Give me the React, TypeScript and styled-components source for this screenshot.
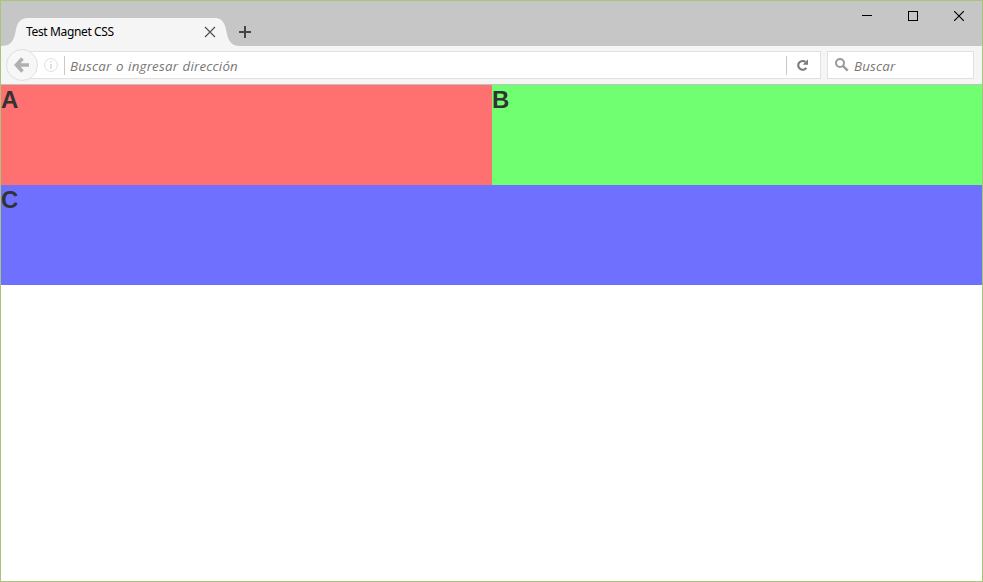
import React from "react";
import styled, { createGlobalStyle } from "styled-components";

const GlobalStyle = createGlobalStyle`
  * { box-sizing: border-box; }
  html, body { margin: 0; padding: 0; overflow: hidden; }
  svg { display: block; flex: none; }
`;

const Window = styled.div`
  width: 983px;
  height: 582px;
  border: 1px solid #a9c47b;
  background: #fff;
  display: flex;
  flex-direction: column;
  overflow: hidden;
  font-family: "Open Sans", "Noto Sans", sans-serif;
`;

const TitleBar = styled.header`
  height: 45px;
  flex: none;
  background: #c6c6c6;
  display: flex;
  align-items: flex-end;
`;

const Tab = styled.div`
  height: 28px;
  display: flex;
`;

const TabBody = styled.div`
  width: 188px;
  height: 28px;
  background: #f5f5f5;
  display: flex;
  align-items: center;
  justify-content: space-between;
`;

const TabTitle = styled.span`
  margin-left: -2px;
  font: 12px/16px "Noto Sans", sans-serif;
  letter-spacing: -0.36px;
  color: #000;
  white-space: nowrap;
`;

const NewTab = styled.button`
  width: 14px;
  height: 28px;
  margin-left: -1px;
  padding: 0;
  border: 0;
  background: none;
`;

const WindowControls = styled.div`
  align-self: flex-start;
  margin-left: auto;
  height: 30px;
  display: grid;
  grid-template-columns: repeat(3, 46px);
`;

const ControlButton = styled.button`
  padding: 0;
  border: 0;
  background: none;
  display: flex;
  align-items: center;
  justify-content: center;
`;

const Toolbar = styled.nav`
  height: 39px;
  flex: none;
  background: #f5f5f5;
  border-bottom: 1px solid #c1c1c1;
  display: flex;
  align-items: center;
  padding: 0 8px 0 5px;
`;

const BackButton = styled.button`
  position: relative;
  z-index: 1;
  width: 32px;
  height: 32px;
  flex: none;
  margin-right: -16px;
  padding: 0;
  border: 1px solid #e0e0e0;
  border-radius: 50%;
  background: #f7f7f7;
  display: flex;
  align-items: center;
  justify-content: center;
`;

const Field = styled.div<{ $width: number; $padding: string }>`
  width: ${(p) => p.$width}px;
  height: 28px;
  padding: ${(p) => p.$padding};
  border: 1px solid #e1e1e1;
  background: #fff;
  display: flex;
  align-items: center;
`;

const SearchField = styled(Field)`
  margin-left: auto;
  gap: 5px;
`;

const Divider = styled.span<{ $left: number; $right: number }>`
  width: 1px;
  height: 19px;
  margin: 0 ${(p) => p.$right}px 0 ${(p) => p.$left}px;
  background: #c9c9c9;
`;

const Placeholder = styled.span`
  font: italic 13.33px/18px "Open Sans", sans-serif;
  letter-spacing: 0.2px;
  word-spacing: 0.8px;
  color: #777;
  white-space: nowrap;
  padding-top: 2px;
`;

const Spacer = styled.span`
  flex: 1;
`;

const Page = styled.main`
  display: grid;
  grid-template-columns: 491px 1fr;
  grid-auto-rows: 100px;
`;

const Block = styled.section<{ $color: string; $wide?: boolean }>`
  grid-column: ${(p) => (p.$wide ? "1 / -1" : "auto")};
  background: ${(p) => p.$color};
`;

const Letter = styled.h2`
  margin: 0;
  padding-top: 1px;
  font: bold 24px/28px "Liberation Sans", Arial, sans-serif;
  color: #333;
`;

export default function App() {
  return (
    <>
      <GlobalStyle />
      <Window>
        <TitleBar>
          <Tab>
            <svg width="27" height="28" viewBox="0 0 27 28">
              <path d="M0 28C9 28 12.5 24 14.5 14C16 5 19 0 27 0V28Z" fill="#f5f5f5" />
            </svg>
            <TabBody>
              <TabTitle>Test Magnet CSS</TabTitle>
              <svg width="12" height="12" viewBox="0 0 12 12">
                <path d="M1 1L11 11M11 1L1 11" stroke="#505050" strokeWidth="1.2" />
              </svg>
            </TabBody>
            <svg width="24" height="28" viewBox="2 0 24 28">
              <path d="M0 0C8 0 11 5 12.5 14C14.5 24 18 28 26 28H0Z" fill="#f5f5f5" />
            </svg>
          </Tab>
          <NewTab aria-label="+">
            <svg width="14" height="28" viewBox="0 0 14 28">
              <path d="M0 14H12M6 8V20" stroke="#454545" strokeWidth="2" />
            </svg>
          </NewTab>
          <WindowControls>
            <ControlButton>
              <svg width="10" height="10" viewBox="0 0 10 10"><path d="M0 4.5H10" stroke="#000" /></svg>
            </ControlButton>
            <ControlButton>
              <svg width="10" height="10" viewBox="0 0 10 10"><rect x=".5" y=".5" width="9" height="9" fill="none" stroke="#000" /></svg>
            </ControlButton>
            <ControlButton>
              <svg width="10" height="10" viewBox="0 0 10 10"><path d="M0 0L10 10M10 0L0 10" stroke="#000" strokeWidth="1.2" /></svg>
            </ControlButton>
          </WindowControls>
        </TitleBar>
        <Toolbar>
          <BackButton>
            <svg width="16" height="16" viewBox="0 0 16 16">
              <path d="M8.5 1.5L2.5 8L8.5 14.5M3 8H15" fill="none" stroke="#b0b0b0" strokeWidth="3.6" />
            </svg>
          </BackButton>
          <Field $width={799} $padding="0 11px 0 21px">
            <svg width="14" height="14" viewBox="0 0 14 14">
              <circle cx="7" cy="7" r="6.4" fill="none" stroke="#dedede" />
              <path d="M7 3V4.6M7 6V11" stroke="#d9d9d9" strokeWidth="1.6" />
            </svg>
            <Divider $left={6} $right={5} />
            <Placeholder>Buscar o ingresar dirección</Placeholder>
            <Spacer />
            <Divider $left={0} $right={10} />
            <svg width="12" height="12" viewBox="0 0 12 12">
              <path d="M8.4 2.9A4.4 4.4 0 1 0 9.3 8.8" fill="none" stroke="#7b7b7b" strokeWidth="2.1" />
              <path d="M11 0.3V5.7H5.8Z" fill="#7b7b7b" />
            </svg>
          </Field>
          <SearchField $width={147} $padding="0 7px">
            <svg width="14" height="14" viewBox="0 0 14 14">
              <circle cx="5" cy="5" r="4" fill="none" stroke="#999" strokeWidth="2" />
              <path d="M8 8L12.7 12.7" stroke="#999" strokeWidth="2.4" />
            </svg>
            <Placeholder>Buscar</Placeholder>
          </SearchField>
        </Toolbar>
        <Page>
          <Block $color="#ff7070"><Letter>A</Letter></Block>
          <Block $color="#70ff70"><Letter>B</Letter></Block>
          <Block $color="#7070ff" $wide><Letter>C</Letter></Block>
        </Page>
      </Window>
    </>
  );
}
